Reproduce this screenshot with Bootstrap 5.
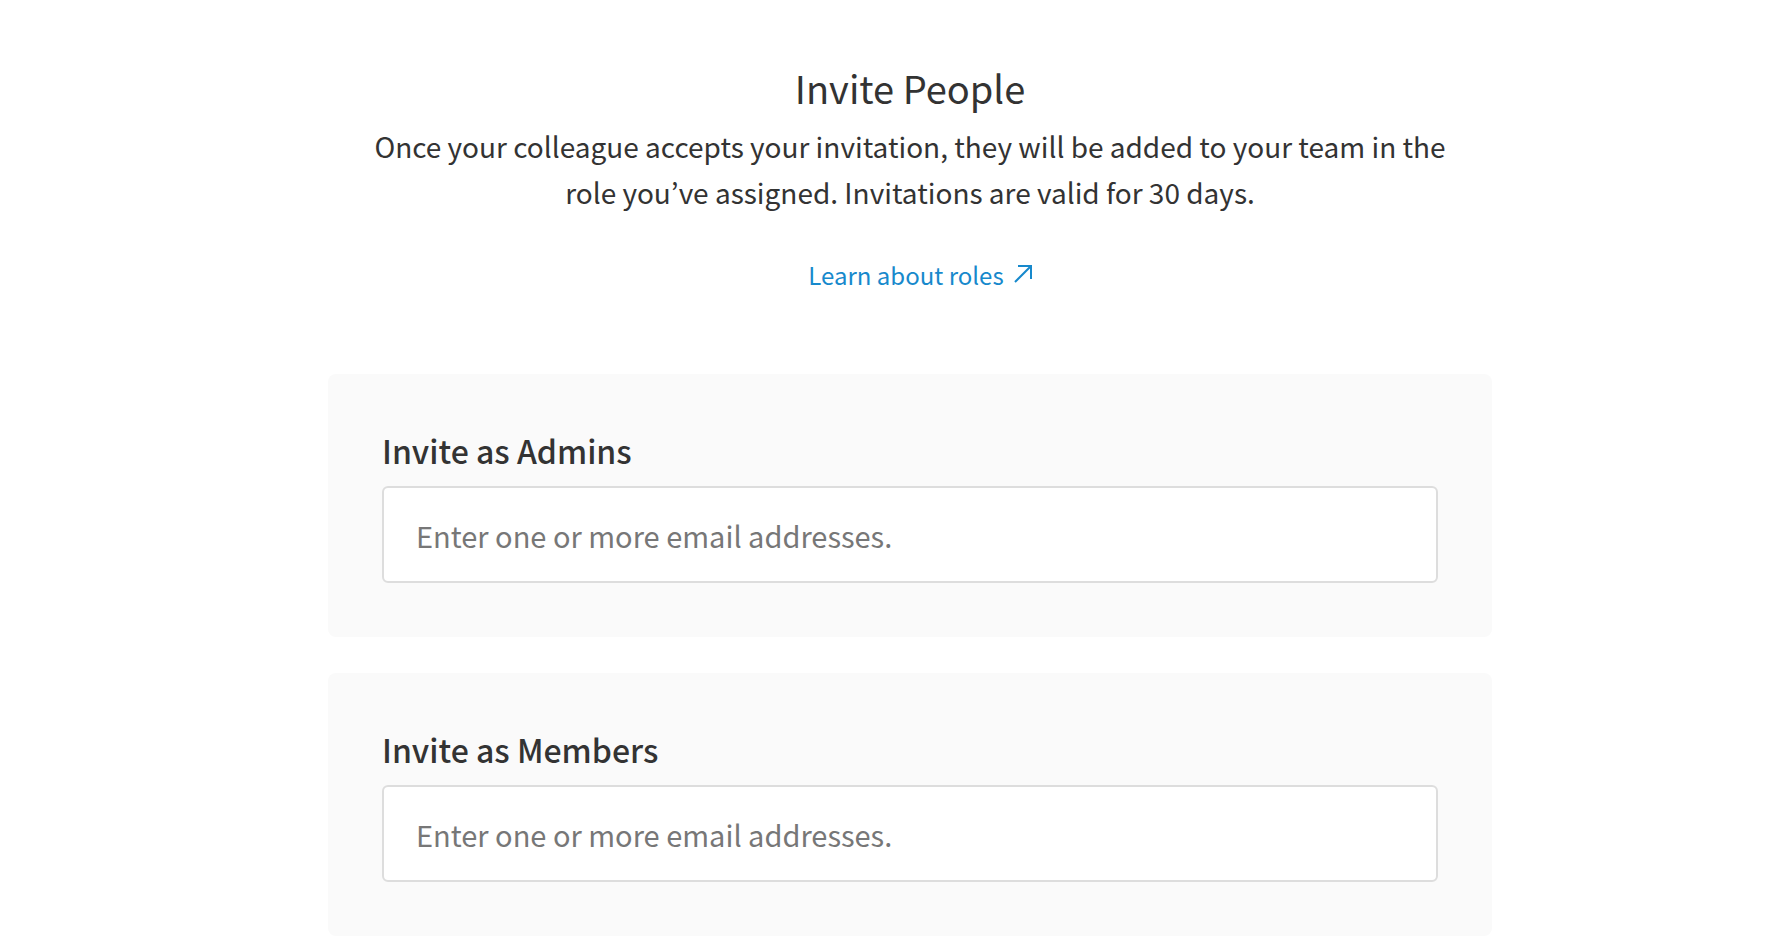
<!DOCTYPE html>
<html lang="en">
<head>
<meta charset="utf-8">
<meta name="viewport" content="width=device-width, initial-scale=1">
<title>Invite People</title>
<link href="https://cdn.jsdelivr.net/npm/bootstrap@5.3.0/dist/css/bootstrap.min.css" rel="stylesheet">
<style>
  body { font-family: "Noto Sans CJK KR", "Open Sans", sans-serif; color: #333; background: #fff; }
  .invite-page { max-width: 1208px; padding: 62px 0 16px 44px; }
  .invite-title { font-size: 38px; line-height: 52px; font-weight: 400; margin-bottom: 9px; }
  .invite-intro { font-size: 28px; line-height: 46px; margin: 0 auto 40px; max-width: 1100px; }
  .roles-link { font-size: 24px; line-height: 40px; color: #1789cc; margin-left: 22px; gap: 10px; }
  .roles-link svg { width: 20px; height: 20px; }
  .invite-form { margin-top: 79px; gap: 36px; }
  .invite-panel { background: #fafafa; border-radius: 8px; padding: 54px; }
  .invite-panel label { font-size: 32px; line-height: 44px; font-weight: 500; margin-bottom: 14px; }
  .invite-panel .form-control { font-size: 29px; line-height: 46px; padding: 24px 32px 23px; border: 2px solid #ddd; border-radius: 6px; }
  .invite-panel .form-control::placeholder { color: #777; opacity: 1; }
</style>
</head>
<body>
<main class="invite-page mx-auto">
  <header class="text-center">
    <h1 class="invite-title">Invite People</h1>
    <p class="invite-intro">Once your colleague accepts your invitation, they will be added to your team in the role you’ve assigned. Invitations are valid for 30 days.</p>
    <a class="roles-link d-inline-flex align-items-center text-decoration-none" href="#roles">Learn about roles
      <svg viewBox="0 0 20 20" fill="none" stroke="currentColor" stroke-width="2" aria-hidden="true"><path d="M4 1H17V14M17 1L1 17"/></svg>
    </a>
  </header>
  <form class="invite-form d-flex flex-column">
    <section class="invite-panel">
      <label class="d-block" for="admins">Invite as Admins</label>
      <input class="form-control" type="text" id="admins" placeholder="Enter one or more email addresses.">
    </section>
    <section class="invite-panel">
      <label class="d-block" for="members">Invite as Members</label>
      <input class="form-control" type="text" id="members" placeholder="Enter one or more email addresses.">
    </section>
  </form>
</main>
<script src="https://cdn.jsdelivr.net/npm/bootstrap@5.3.0/dist/js/bootstrap.bundle.min.js"></script>
</body>
</html>
